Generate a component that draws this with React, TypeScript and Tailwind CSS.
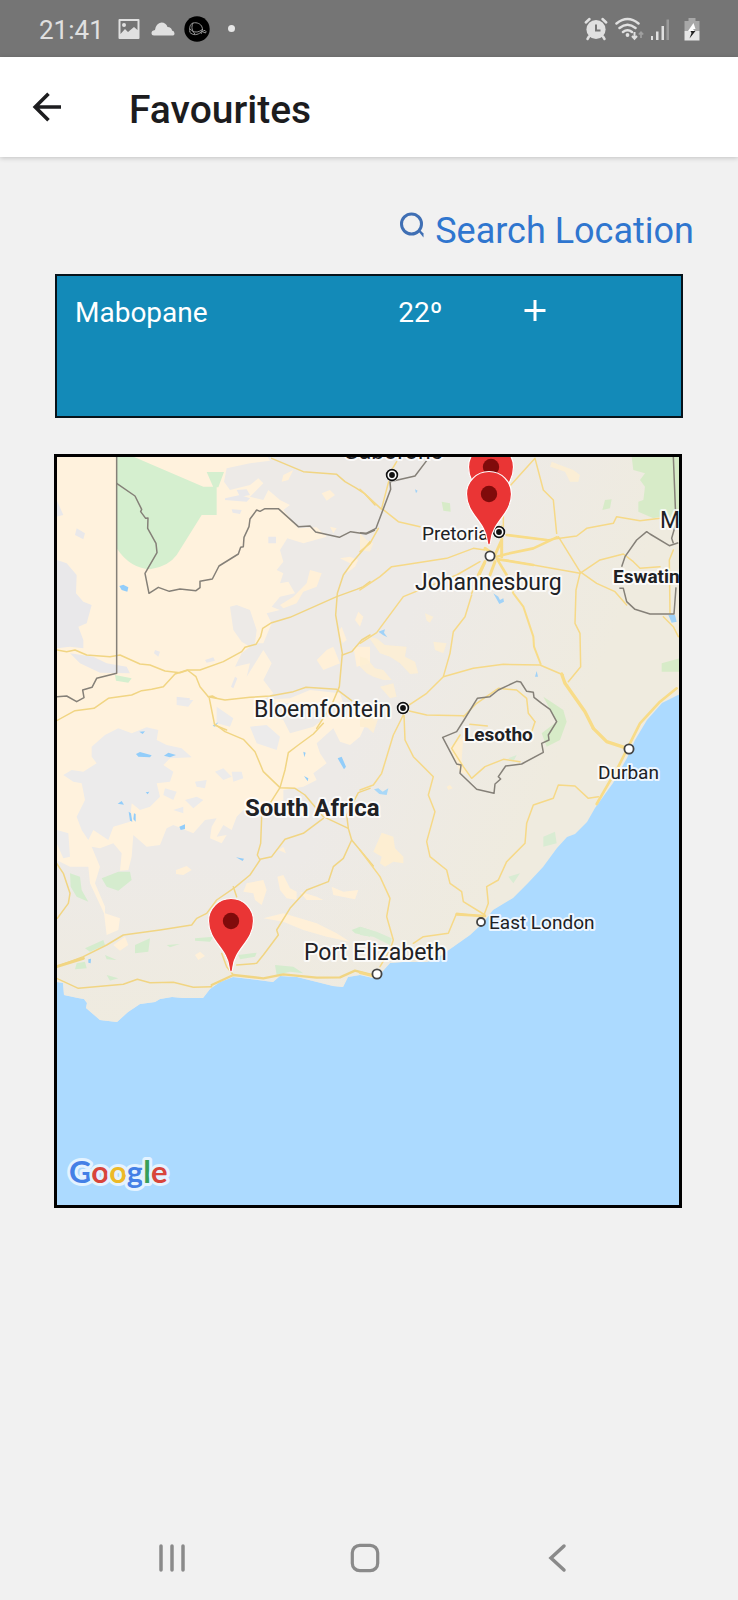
import React from "react";

type LabelProps = { x: number; y: number; size: number; bold?: boolean; children: React.ReactNode };

function Label({ x, y, size, bold, children }: LabelProps) {
  return (
    <text
      x={x}
      y={y}
      fontSize={size}
      fontWeight={bold ? 700 : 400}
      fill="#202124"
      stroke="#ffffff"
      strokeOpacity={0.8}
      strokeWidth={4}
      strokeLinejoin="round"
      paintOrder="stroke"
    >
      {children}
    </text>
  );
}

function Pin({ x, y }: { x: number; y: number }) {
  return (
    <g transform={`translate(${x} ${y})`}>
      <path
        d="M0 0C-1.2 0-1.6-2-1.9-5C-3.5-23-22.5-31-22.5-51A22.5 22.5 0 0 1 22.5-51C22.5-31 3.5-23 1.9-5C1.600-2 1.200 0 0 0Z"
        fill="#ea3535"
        stroke="#fff"
        strokeWidth="1.2"
      />
      <circle cy="-51" r="8.2" fill="#800b0b" />
    </g>
  );
}

function Town({ x, y, r = 4.6 }: { x: number; y: number; r?: number }) {
  return <circle cx={x} cy={y} r={r} fill="#fff" stroke="#444" strokeWidth="1.8" />;
}

function Capital({ x, y }: { x: number; y: number }) {
  return (
    <g>
      <circle cx={x} cy={y} r="6.6" fill="#fff" />
      <circle cx={x} cy={y} r="5.4" fill="#fff" stroke="#111" strokeWidth="1.7" />
      <circle cx={x} cy={y} r="2.9" fill="#111" />
    </g>
  );
}

const land =
  "M50 450H690V691L678 695 662 703 647 720 635 740 627 758 613 783 595 808 587 822 575 834 567 837 557 848 543 867 528 883 513 898 493 910 483 923 470 935 453 947 437 958 427 962 403 962 390 963 382 972 373 978 360 975 348 977 343 987 333 986 317 982 297 977 280 976 273 982 250 979 233 977 220 982 210 989 203 998 183 998 172 997 160 999 155 1002 140 1004 128 1012 117 1022 100 1020 93 1014 86 1008 87 1003 84 999 78 998 64 995 63 983 50 981Z";

function RouteMap() {
  return (
    <svg
      viewBox="57 457 622 748"
      className="block w-full"
      role="img"
      aria-label="Map of favourite locations"
      style={{ fontFamily: "Roboto, sans-serif" }}
    >
      <defs>
        <linearGradient id="terrain" gradientUnits="userSpaceOnUse" x1="380" y1="680" x2="560" y2="760">
          <stop offset="0" stopColor="#edeae7" />
          <stop offset="1" stopColor="#efebdf" />
        </linearGradient>
        <linearGradient id="south" x1="0" y1="0" x2="0" y2="1">
          <stop offset="0" stopColor="#efebdf" stopOpacity="0" />
          <stop offset="1" stopColor="#efebdf" />
        </linearGradient>
        <clipPath id="shore">
          <path d={land} />
        </clipPath>
      </defs>
      <rect x="57" y="457" width="622" height="748" fill="#acdaff" />
      <path d={land} fill="url(#terrain)" />
      <g clipPath="url(#shore)">
        <rect x="57" y="860" width="622" height="170" fill="url(#south)" />

        {/* north-west */}
        <g transform="translate(50 450) scale(.33333)">
          <path
            d="M0 0H640L660 32 600 40 530 55 522 95 540 120 600 105 625 85 640 100 600 140 640 150 655 120 690 150 720 165 700 180 745 235 800 232 830 260 760 280 712 265 690 300 700 335 680 360 700 370 690 400 715 395 735 430 690 440 665 470 690 480 650 490 665 520 640 580 615 580 620 540 600 480 560 465 540 470 550 540 575 575 600 590 575 610 555 650 600 640 590 680 640 600 665 640 640 690 670 730 640 750 720 745 780 720 870 730 880 760H0Z"
            fill="#fff2dd"
          />
          <path d="M20 330L50 340 80 375 78 430 100 455 125 465 110 520 85 530 100 570 100 595 60 590 20 595ZM60 610L130 620 170 640 230 650 240 670 150 668 90 640ZM80 235L105 250 100 268 75 255ZM20 150L40 195 20 200ZM380 740L420 745 415 765 380 765ZM655 260H678V280H655ZM525 145L570 135 600 145 590 155 525 150ZM545 178L575 180 570 192 548 188ZM315 600L330 605 325 620 312 610ZM465 630L490 622 495 632 470 638ZM555 680L562 685 550 715 543 710ZM560 120L590 118 600 135 570 140Z" fill="#e9e8ea" />
          <path d="M200 20H250L460 110H500V195H455L380 315Q355 350 300 358Q240 355 200 295ZM470 66H522L505 112H490ZM195 675L245 685 235 698 198 692Z" fill="#d5efcf" />
          <path d="M208 408L220 404 235 412 232 425 215 420Z" fill="#92cdfa" />
          <path d="M815 130L840 120 855 135 830 152ZM690 465L730 440 770 400 780 360 815 370 800 410 760 425 740 460 700 475ZM870 325L900 320 925 330 915 350 890 370 900 340ZM925 485L940 500 930 530 915 510ZM875 530L890 570 878 580 865 545ZM840 230L860 235 850 250ZM700 75L730 60 715 90 695 95ZM800 630L830 600 850 590 870 640 820 660ZM910 590H960V640L920 650Z" fill="#fff0d8" />
        </g>

        {/* south-west */}
        <g transform="translate(50 700) scale(.33333)">
          <path
            d="M0 0H600L640 40 700 60 720 100 790 80 830 50 960 45 930 110 900 135 870 125 850 85 800 130 810 160 830 190 790 220 800 240 760 260 700 270 700 300 640 330 580 330 560 350 545 390 520 375 500 410 530 405 515 430 480 415 485 380 500 355 465 360 430 400 370 375 350 385 330 435 290 440 250 405 245 470 235 510 210 512 215 460 190 430 150 445 125 440 150 500 135 550 165 620 165 640 210 655 205 690 170 705 162 640 120 550 115 500 60 500 20 480Z"
            fill="#fff2dd"
          />
          <path
            d="M125 140L165 105 205 85 245 100 290 82 325 90 320 120 350 135 395 145 425 172 360 175 340 195 370 215 360 245 320 250 330 290 300 320 270 330 245 310 240 365 190 380 175 420 130 390 115 420 95 390 80 350 105 300 95 250 70 245 40 225 65 210 100 215 140 190 125 170ZM435 245L470 240 465 265 440 260ZM495 215L520 205 545 230 520 240ZM545 215L575 215 580 235 550 245ZM380 0H430L415 20 380 15ZM500 20L550 55 540 80 500 70ZM345 265L380 275 370 300 340 285ZM405 300L440 290 460 300 430 325ZM370 330L400 320 400 340ZM20 390L55 400 60 470 40 475 20 430ZM600 80L650 75 690 110 680 150 620 130Z"
            fill="#ecebeb"
          />
          <path d="M155 535L205 515 240 515 245 540 205 572 170 560ZM60 520L90 530 95 570 115 605 80 590 62 560ZM105 745L160 720 165 735 120 755ZM80 790L105 785 110 805 75 808ZM255 735L300 715 295 755 255 760ZM350 735L390 732 360 742ZM435 715L490 710 480 725 435 722ZM565 765L620 758 615 770 570 778ZM170 825L205 835 180 842ZM675 795L730 800 760 820 720 815 680 825ZM905 690L930 680 960 690V710L915 700ZM165 765L200 780 170 778Z" fill="#d5ecce" />
          <path d="M378 510L410 498 425 510 400 525 378 522ZM682 530L700 525 720 565 740 575 740 600 710 595 690 570ZM590 550L640 540 650 570 635 615 615 600 610 580 580 575ZM640 655L700 640 800 670 860 700 900 725 830 710 760 690 700 665ZM845 560L880 575 925 570 915 598 850 585ZM750 575L800 590 820 600 770 600ZM190 735L225 710 235 735 210 752ZM435 765L450 755 465 768 445 780ZM685 450L700 440 708 460ZM0 640H20V700H0Z" fill="#fff0d8" />
          <path d="M258 162L270 156 305 166 300 172 265 170ZM342 167L355 158 378 165 360 172ZM268 95L285 94 278 102ZM203 311L215 303 222 314ZM236 335L243 340 247 365 240 362ZM252 340L257 342 257 365 250 358ZM388 380L405 373 405 387 392 390ZM558 472L582 476 578 483ZM863 175L875 170 888 200 882 208ZM762 228L775 235 773 244ZM760 155L767 158 763 172ZM287 277L298 275 293 283ZM115 778L123 776 122 790 115 788ZM488 77L505 67 495 80Z" fill="#92cdfa" />
        </g>

        {/* north-east */}
        <g transform="translate(360 450) scale(.33333)">
          <path d="M815 20H960V240L925 195 880 205 835 185 835 155 850 150 855 110 840 90 855 70 820 60ZM735 150L755 148 750 175 727 180ZM245 155L270 160 272 185 250 182ZM905 640L960 625V665L905 665ZM550 740L580 760 610 780 620 815 600 870 560 890 545 850 590 815Z" fill="#d7ebc8" />
          <path d="M575 35L600 45 640 60 660 75 655 95 630 95 615 65 570 50ZM25 560L50 565 75 585 140 590 135 620 165 635 175 670 150 672 120 640 90 620 60 610ZM0 620L20 625 45 655 70 660 95 690 70 690 40 680 20 670 0 650ZM195 490L220 500 210 518 200 512ZM220 575L260 580 250 610 225 600ZM0 250L20 270 40 280 30 305 0 300ZM60 710L100 700 110 740 90 745ZM10 800L60 790 40 850 20 830Z" fill="#fdeed2" opacity=".85" />
          <path d="M400 430L415 440 420 450 430 445 432 455 418 462ZM55 545L75 538 72 548 82 562 70 556ZM525 680L530 663 534 680ZM165 118L173 122 168 130ZM925 495L945 495 950 515 935 518Z" fill="#a0d2f8" />
        </g>

        {/* south-east */}
        <g transform="translate(360 680) scale(.33333)">
          <path d="M40 515L65 458 100 470 105 505 130 530 130 550 100 545 75 560 60 550 65 530ZM260 320L270 315 278 325 265 330ZM270 200L310 170 305 240 320 285 300 275 280 230ZM0 100L45 125 40 145 0 140Z" fill="#fdeed2" />
          <path d="M0 740L50 755 95 775 90 795 40 770 0 765ZM550 470L585 455 590 490 550 500ZM445 235L470 225 460 245ZM445 590L480 580 460 610Z" fill="#d9ecd3" />
          <path d="M42 328L55 325 68 335 85 325 80 345 58 342Z" fill="#a9d8f8" />
        </g>
      </g>

      {/* roads */}
      <g fill="none" stroke="#f6d987" strokeWidth="4.5" strokeLinejoin="round" strokeLinecap="round">
        <g transform="translate(50 450) scale(.33333)" stroke="#f1d583">
          <path d="M20 600L50 605 75 600 110 615 180 620 210 615 270 642 300 645 345 663 390 668 415 660 450 660 520 635 575 605 585 592 618 583 632 560 638 535 665 518 720 502 860 440 920 418 940 410 960 395" />
          <path d="M665 25L760 65 860 73 885 95 920 115 945 132 975 165" />
          <path d="M20 812L75 782 132 775 175 745 245 735 275 722 305 718 340 710 375 672 412 660 438 680 450 710 475 740 525 750 600 742 660 738 730 725 768 712 860 718 905 752" />
          <path d="M475 740L487 738 500 745M478 745L494 825 530 840" />
          <path d="M960 275L905 340 880 375 862 430 857 495 877 610 868 710 845 765 800 835" />
          <path d="M877 615L905 605 935 570 960 555" />
        </g>
        <g transform="translate(50 700) scale(.33333)" stroke="#f1d583">
          <path d="M494 72L525 95 580 118 615 155 640 215 690 263 735 265 765 285 820 350 895 385 905 420 880 475 850 500 835 545 770 570 720 625 680 690 685 705 640 765 620 790 560 795" />
          <path d="M820 70L790 102 745 135 715 158 705 210 690 263 660 310 635 350 632 430 622 465 630 480 600 525 555 562 500 600 470 640 440 655 425 675 330 690 220 705 170 735 100 770 20 800" />
          <path d="M630 478L665 470 705 418 760 400 820 355M895 385L890 345 925 278 960 265M905 420L970 498M550 560L560 590" />
          <path d="M20 490L40 520 60 580 55 610 22 655" />
          <path d="M20 835L85 865 220 853 262 838 300 848 370 847 430 862 485 860M515 760L530 800 550 825" />
          <path d="M485 855L550 825 640 835 700 823 800 833 870 832 915 812 965 825" strokeWidth="7" />
          <path d="M20 800L100 775" strokeWidth="9" />
        </g>
        <g transform="translate(360 450) scale(.33333)">
          <path d="M110 35L95 60 65 175 115 215 180 230M0 118L65 178M55 235L30 280 0 305M430 160L430 230M430 130L525 25 550 120 580 150 590 250" />
          <path d="M440 255L560 270 650 258 680 235 760 220 770 200 840 212 900 205" />
          <path d="M375 300L340 295 260 325 130 345 95 350 60 380 0 420M360 335L290 375 130 440 50 548 0 580" />
          <path d="M435 330L520 345 660 370 720 330 790 312 820 335 840 355 900 350M595 260L660 365 710 400 765 425 800 465" />
          <path d="M660 370L648 420 645 520 660 550 662 650 625 695M335 435L315 500 280 545 270 610 250 680 200 730 140 770M250 680L340 655 430 643 540 645 610 675" />
          <path d="M375 340L335 430M910 500L940 530 955 560" />
          <path d="M375 335L355 375M405 335L390 375M375 295L405 315 425 270M425 230L425 320" strokeWidth="9" stroke="#f8dc88" />
          <path d="M440 255L560 270M410 320L440 312 520 295 590 262M410 325L440 375M415 328L520 345" strokeWidth="8" stroke="#f8dc88" />
          <path d="M440 375L460 430 490 470 520 560 522 590 542 642" strokeWidth="6" stroke="#f8dc88" />
          <path d="M605 672L615 700 675 785 700 835" strokeWidth="10" stroke="#f8dc88" />
          <path d="M135 780L200 795 310 797M940 300L928 330 930 490" />
          <path d="M310 800L350 760 415 715 470 720 500 745 505 790 525 815" />
        </g>
        <g transform="translate(360 680) scale(.33333)">
          <path d="M130 105L100 165 65 280 40 315 0 330M132 105L135 180 160 230 220 290 205 345 225 395 200 485 210 530 260 570 270 610 305 635 310 665 375 705" />
          <path d="M0 510L60 590 90 655 80 710 100 780 90 810 60 860M160 790L190 770 265 760 290 700 370 710 385 670 380 620 415 600 440 545 495 490 500 430 520 375 580 355 595 315 645 318 685 355 715 350" />
          <path d="M525 125L515 155 495 160M300 165L275 205 310 260 335 295 375 260 430 238 480 245M330 133L382 138" />
          <path d="M700 145L740 185 795 203" strokeWidth="10" stroke="#f8dc88" />
          <path d="M800 210L775 260 740 320 710 372M805 200L840 130 900 65 950 25" strokeWidth="8" stroke="#f8dc88" />
          <path d="M290 703L375 708M0 878L40 888" strokeWidth="8" />
        </g>
      </g>

      {/* borders */}
      <g fill="none" stroke="#858078" strokeWidth="4.500" strokeLinejoin="round">
        <g transform="translate(50 450) scale(.33333)">
          <path d="M200 15V670L140 685 126 712 98 720 102 743 80 755 50 738 20 740" />
          <path d="M200 100L255 138 275 178 272 185 287 205 294 204 293 235 318 280 321 308 285 370 297 430 325 412 358 424 390 417 438 422 450 413 450 394 487 387 507 348 565 312 572 292 580 290 582 262 597 230 600 207 620 180 630 184 645 176 685 176 745 230 780 228 797 246 868 262 902 245 948 252 975 240" />
        </g>
        <g transform="translate(360 450) scale(.33333)">
          <path d="M0 248L18 250 48 235 92 118 90 95 165 78 200 32" />
          <path d="M785 350L795 320 830 270 860 245 870 252 928 287 955 278M940 20L948 220 935 265 940 280M778 415L790 415 800 455 825 478 870 492 942 492 948 412" />
        </g>
        <g transform="translate(360 680) scale(.33333)">
          <path d="M248 172L290 155 312 120 352 55 390 50 415 30 470 4 482 6 500 34 520 37 522 52 545 70 570 88 590 125 565 165 567 180 545 190 550 217 485 252 437 258 415 290 422 297 405 312 402 340 350 328 300 280 303 255 290 252Z" />
        </g>
      </g>

      <Label x={343} y={459} size={23}>Gaborone</Label>
      <Label x={422} y={540} size={19}>Pretoria</Label>
      <Label x={415} y={590} size={23}>Johannesburg</Label>
      <Label x={660} y={528} size={23}>Maputo</Label>
      <Label x={613} y={583} size={19} bold>Eswatini</Label>
      <Label x={254} y={717} size={23}>Bloemfontein</Label>
      <Label x={464} y={741} size={19} bold>Lesotho</Label>
      <Label x={598} y={779} size={19}>Durban</Label>
      <Label x={245} y={816} size={24} bold>South Africa</Label>
      <Label x={489} y={929} size={19}>East London</Label>
      <Label x={304} y={960} size={23}>Port Elizabeth</Label>

      <Capital x={392} y={475} />
      <Capital x={499} y={532} />
      <Capital x={403} y={708} />
      <Town x={490} y={556} />
      <Town x={629} y={749} />
      <Town x={481} y={922} r={4} />
      <Town x={377} y={974} />

      <Pin x={491} y={518} />
      <Pin x={489} y={545} />
      <Pin x={231} y={972} />

      <text
        x="69"
        y="1183"
        fontSize="31"
        fontWeight="700"
        stroke="#e4f3ff"
        strokeWidth="6"
        strokeLinejoin="round"
        paintOrder="stroke"
        style={{ fontFamily: "Lato, sans-serif" }}
      >
        <tspan fill="#4480e6">G</tspan>
        <tspan fill="#d8453b">o</tspan>
        <tspan fill="#edb928">o</tspan>
        <tspan fill="#4480e6">g</tspan>
        <tspan fill="#36a05a">l</tspan>
        <tspan fill="#d8453b">e</tspan>
      </text>
    </svg>
  );
}

function StatusBar() {
  return (
    <div className="flex h-[57px] items-center bg-[#757575] pl-[39px] pr-[38px] text-[#e0e0e0]">
      <span className="pt-[2px] text-[26px] leading-8">21:41</span>
      <svg className="ml-[14px] h-[22px] w-[22px]" viewBox="0 0 22 22" aria-hidden="true">
        <path
          fillRule="evenodd"
          fill="currentColor"
          d="M1.5 1H20.500Q21.500 1 21.500 2V20Q21.500 21 20.500 21H1.500Q.5 21 .5 20V2Q.5 1 1.500 1ZM2.500 3V16L7 11 10 14 16 9 19.500 12V3ZM6 5A2 2 0 1 1 6 9A2 2 0 0 1 6 5Z"
        />
      </svg>
      <svg className="ml-[11px] h-[22px] w-[24px]" viewBox="0 0 24 22" fill="currentColor" aria-hidden="true">
        <path d="M3 17.500Q.5 17.500 .5 15Q.5 12.500 4 12Q5 5 10.500 4.500Q15 4.500 16.500 9Q20.500 9 21 12.500Q23.500 13 23.500 15.500Q23.500 17.500 22 17.500Z" />
      </svg>
      <svg className="ml-[9px] h-[26px] w-[26px]" viewBox="0 0 26 26" fill="none" aria-hidden="true">
        <circle cx="13" cy="13" r="12.700" fill="#000" />
        <path
          d="M6 16C5 12 6 8 9 7C13 6 17 8 18 11C19 13 18 16 17 18M6 13C10 17 14 17 19 13M5.500 16C9 20 14 19 17 16M9 7C7 11 8 15 11 18M19 15.500A1.500 1.500 0 1 1 21.500 17L17 15"
          stroke="#a5a5a5"
          strokeWidth=".9"
        />
      </svg>
      <span className="ml-[18px] h-[7px] w-[7px] rounded-full bg-[#e6e6e6]" />
      <svg className="ml-auto h-[24px] w-[24px]" viewBox="0 0 24 24" fill="none" aria-hidden="true">
        <circle cx="12" cy="12.500" r="9.600" fill="currentColor" />
        <path d="M1.800 5.500L5.500 2M22.200 5.500L18.500 2M5 19.500L3.500 22M19 19.500L20.500 22" stroke="currentColor" strokeWidth="2.500" strokeLinecap="round" />
        <path d="M12 7.500V13.500H16.500" stroke="#757575" strokeWidth="2" />
      </svg>
      <svg className="ml-[7px] h-[24px] w-[29px]" viewBox="0 0 29 24" fill="none" stroke="currentColor" aria-hidden="true">
        <path d="M1.500 6.500Q12.500-2.500 23.500 6.500M4.500 11Q12.500 4.500 20.500 11M8 15Q12.500 11.500 17 15" strokeWidth="2.500" strokeLinecap="round" />
        <circle cx="12.500" cy="18" r="1.900" fill="currentColor" stroke="none" />
        <path d="M19.500 15V21.500M17 19L19.500 21.800 22 19" strokeWidth="2" />
        <path d="M26 21V15.500M23.800 17.500L26 15.200 28.200 17.500" strokeWidth="1.700" opacity=".4" />
      </svg>
      <svg className="ml-[6px] h-[24px] w-[20px]" viewBox="0 0 20 24" fill="currentColor" aria-hidden="true">
        <path d="M1 19H3V23H1ZM6 14.500H8.500V23H6ZM11.500 9H14V23H11.500Z" />
        <path d="M16.500 2.500H19V23H16.500Z" opacity=".35" />
      </svg>
      <svg className="ml-[14px] h-[24px] w-[16px]" viewBox="0 0 16 24" aria-hidden="true">
        <path d="M4.500 1H11.500V4H15.500V14H.5V4H4.500Z" fill="#a8a8a8" />
        <path d="M.5 14H15.500V23.500H.5Z" fill="#e6e6e6" />
        <path d="M9.500 6L4 14H8L10.500 14 9 12 11.500 12Z" fill="#fff" />
        <path d="M6.500 14H11.500L5.500 21.500 7.500 16Z" fill="#222" />
      </svg>
    </div>
  );
}

export default function App() {
  return (
    <div className="flex min-h-screen flex-col bg-[#f1f1f1]" style={{ fontFamily: "Roboto, sans-serif" }}>
      <StatusBar />
      <header className="flex h-[100px] items-center bg-white pl-8 shadow-[0_1px_5px_rgba(0,0,0,0.2)]">
        <button type="button" aria-label="Back" className="block h-[30px] w-[30px]">
          <svg viewBox="0 0 30 30" className="h-[30px] w-[30px]" fill="none" stroke="#1d1d1f" strokeWidth="3.600" aria-hidden="true">
            <path d="M29 15H3M16.500 1.800L3.200 15 16.500 28.200" />
          </svg>
        </button>
        <h1 className="ml-[67px] pt-[6px] text-[39px] font-medium leading-[44px] text-[#1c1c1e]">Favourites</h1>
      </header>

      <main className="pt-[50px]">
        <div className="flex justify-end pr-[44px]">
          <a href="#search" className="flex items-end gap-[10px] text-[36px] leading-[48px] text-[#2f76cf]">
            <svg viewBox="0 0 26 28" className="mb-4 h-[28px] w-[26px]" fill="none" stroke="#3f6fb4" strokeWidth="3" aria-hidden="true">
              <circle cx="12.500" cy="13" r="10" />
              <path d="M19.500 20.500L21.500 19.500 24.500 22.500V26.500Z" fill="#3f6fb4" stroke="none" />
            </svg>
            Search Location
          </a>
        </div>

        <section className="ml-[55px] mr-[55px] mt-[19px] min-h-[144px] border-2 border-[#07131a] bg-[#138ab8] pl-[18px] pt-[18px] text-white">
          <div className="grid grid-cols-[8fr_3fr_4fr] items-start text-[28px] leading-[38px]">
            <span>Mabopane</span>
            <span>22º</span>
            <button type="button" aria-label="Add Mabopane" className="ml-1 mt-[5px] block h-6 w-6">
              <svg viewBox="0 0 24 24" className="h-6 w-6" stroke="#fff" strokeWidth="3" aria-hidden="true">
                <path d="M12 1V22M1.500 11.500H22.500" />
              </svg>
            </button>
          </div>
        </section>

        <section className="ml-[54px] mr-[56px] mt-9 border-[3px] border-black">
          <RouteMap />
        </section>
      </main>

      <nav aria-label="System" className="mt-auto grid h-[84px] grid-cols-3 items-center justify-items-center pl-[76px] pr-[84px]">
        <button type="button" aria-label="Recent apps">
          <svg viewBox="0 0 30 30" className="h-[30px] w-[30px]" stroke="#8a8a8a" strokeWidth="3.500" strokeLinecap="round" aria-hidden="true">
            <path d="M4 3V27M15 3V27M26 3V27" />
          </svg>
        </button>
        <button type="button" aria-label="Home">
          <svg viewBox="0 0 30 30" className="h-[30px] w-[30px]" fill="none" stroke="#8a8a8a" strokeWidth="3.200" aria-hidden="true">
            <rect x="2.300" y="2.300" width="25.400" height="25.400" rx="7.500" />
          </svg>
        </button>
        <button type="button" aria-label="Go back">
          <svg viewBox="0 0 30 30" className="h-[30px] w-[30px]" fill="none" stroke="#8a8a8a" strokeWidth="3.500" strokeLinecap="round" aria-hidden="true">
            <path d="M21 3L8 15 21 27" />
          </svg>
        </button>
      </nav>
    </div>
  );
}
